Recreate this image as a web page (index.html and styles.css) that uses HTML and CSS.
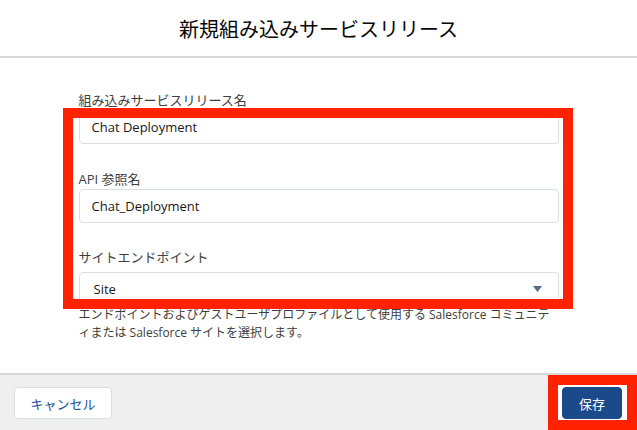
FILE: index.html
```html
<!DOCTYPE html>
<html lang="ja">

<head>
  <meta charset="UTF-8">
  <meta name="viewport" content="width=device-width, initial-scale=1.0">
  <title>新規組み込みサービスリリース</title>
  <link rel="stylesheet" href="styles.css">
</head>

<body>
  <div class="modal">
    <header class="head">
      <h2 class="title">新規組み込みサービスリリース</h2>
    </header>

    <main class="content">
      <div class="form">
        <div class="field">
          <label class="label">組み込みサービスリリース名</label>
          <input class="inp" type="text" value="Chat Deployment">
        </div>

        <div class="field">
          <label class="label">API 参照名</label>
          <input class="inp" type="text" value="Chat_Deployment">
        </div>

        <div class="field field-select">
          <label class="label">サイトエンドポイント</label>
          <div class="select">
            <span>Site</span>
            <svg class="arrow" width="9" height="6" viewBox="0 0 9 6">
              <path d="M0 0 H9 L4.5 6 Z" fill="#54698d" />
            </svg>
          </div>
          <p class="help">エンドポイントおよびゲストユーザプロファイルとして使用する Salesforce コミュニティまたは Salesforce サイトを選択します。</p>
        </div>

        <!-- 注釈の赤枠 -->
        <div class="mark"></div>
      </div>
    </main>

    <footer class="foot">
      <button class="btn btn-cancel">キャンセル</button>
      <span class="save-wrap">
        <button class="btn btn-save">保存</button>
      </span>
    </footer>
  </div>
</body>

</html>
```

FILE: styles.css
```css
html,
body {
  margin: 0;
  height: 100%;
  background: #fff;
  font-family: "Open Sans", "Noto Sans CJK JP", sans-serif;
  color: #181818;
  overflow: hidden;
}

.modal {
  height: 100%;
  display: flex;
  flex-direction: column;
}

.head {
  height: 56px;
  border-bottom: 2px solid #d8d8d8;
  display: flex;
  align-items: center;
  justify-content: center;
}

.title {
  margin: 0;
  font-size: 20px;
  font-weight: 400;
  color: #080707;
  font-family: "Noto Sans CJK JP", sans-serif;
}

.content {
  flex: 1;
}

.form {
  position: relative;
  width: 480px;
  margin: 0 auto;
  padding-top: 33px;
}

.field {
  margin-top: 26px;
}

.field:first-child {
  margin-top: 0;
}

.field-select {
  margin-top: 25px;
}

.label {
  display: block;
  font-size: 13px;
  line-height: 18px;
  margin-bottom: 1px;
  color: #3e3e3c;
}

.field-select .label {
  margin-bottom: 6px;
}

.inp {
  display: block;
  box-sizing: border-box;
  width: 480px;
  height: 34px;
  margin: 0;
  padding: 0 12px;
  border: 1px solid #d8dde6;
  border-radius: 4px;
  font-family: inherit;
  font-size: 13px;
  color: #181818;
  background: #fff;
}

.select {
  box-sizing: border-box;
  height: 34px;
  padding: 0 16px 0 14px;
  border: 1px solid #d8dde6;
  border-radius: 4px;
  display: flex;
  align-items: center;
  justify-content: space-between;
  font-size: 13px;
}

.help {
  margin: 0;
  font-size: 12px;
  line-height: 18px;
  color: #3e3e3c;
}

.mark {
  position: absolute;
  left: -16px;
  top: 50px;
  width: 510px;
  height: 201px;
  box-sizing: border-box;
  border: 10px solid #ff2200;
}

.foot {
  box-sizing: border-box;
  height: 57px;
  flex-shrink: 0;
  border-top: 2px solid #d8d8d8;
  background: #efefef;
  padding: 12px 10px 0 14px;
  display: flex;
  justify-content: space-between;
  align-items: flex-start;
}

.btn {
  height: 32px;
  border-radius: 4px;
  font-family: inherit;
  font-size: 13px;
  cursor: pointer;
}

.btn-cancel {
  width: 98px;
  background: #fff;
  border: 1px solid #d8dde6;
  color: #1b5297;
}

.save-wrap {
  margin-top: -2px;
  padding: 2px 5px 1px 4px;
  background: #fff;
  outline: 10px solid #ff2200;
  display: flex;
}

.btn-save {
  width: 60px;
  background: #1b4a8b;
  border: 1px solid #1b4a8b;
  color: #fff;
}
```
